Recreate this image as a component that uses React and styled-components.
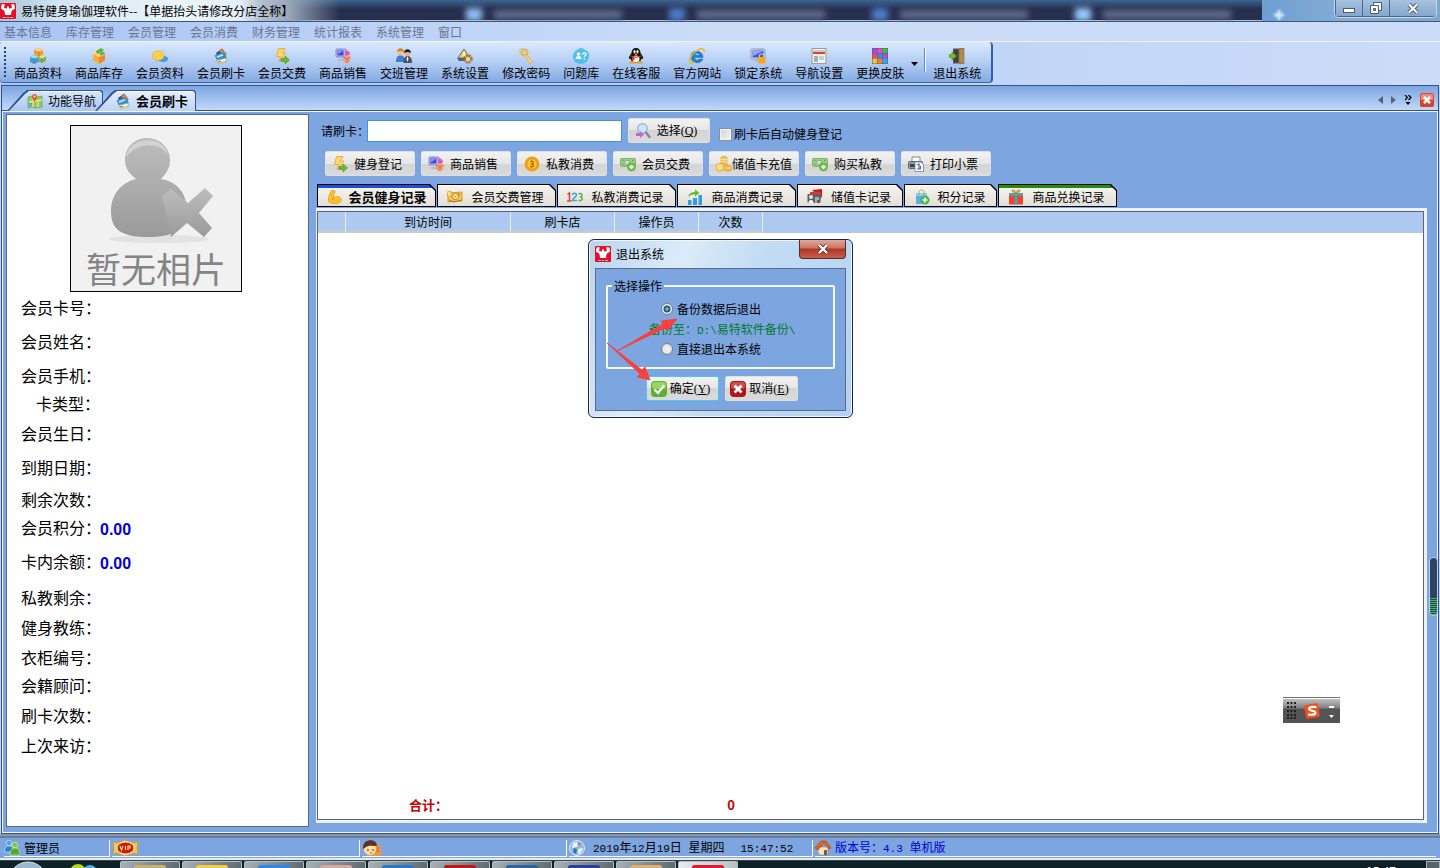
import React, { useState } from 'react';
import styled, { createGlobalStyle } from 'styled-components';

const GlobalStyle = createGlobalStyle`
    * {
        box-sizing: border-box;
    }
    body {
        margin: 0;
        overflow: hidden;
        font-family: "Noto Sans CJK SC", sans-serif;
        font-size: 12px;
        line-height: 14px;
        color: #000;
        background: #7da5e0;
    }
    button, input {
        margin: 0;
        font: inherit;
        color: inherit;
    }
    button {
        padding: 0;
        border: 0;
        background: none;
    }
    svg {
        display: block;
        flex: none;
    }
`;

/* ---------- icons ---------- */

const Logo = () => (
    <>
        <rect width="16" height="16" rx="1" fill="#e60f26" />
        <path d="M1.500 1.500l3-.5v2L4 5l3 .5V3.500h2v2l3-.5-.5-2V1l3 .5.500 4-3.500 2.500-.5 4h-6l-.5-4L1 5.500z" fill="#fff" />
        <path d="M3 14.500h3M7 14.500h2M10 14.500h3" stroke="#ffb9bd" strokeWidth="1" />
    </>
);

const Bolt = () => (
    <>
        <path d="M4.500.5h6.500L8.500 5H12L5 14l1.500-5.500H2.500z" fill="#ffd766" stroke="#e0a63a" strokeWidth=".8" />
        <path d="M7 10.500h4V8l4.500 4-4.500 4v-2.500H7z" fill="#6fba2c" stroke="#4a8f1c" strokeWidth=".6" />
    </>
);

const Shop = () => (
    <>
        <rect x="1" y="1" width="10" height="8" rx="1" fill="#b4b8f0" stroke="#8088d0" />
        <rect x="2.500" y="2.500" width="6" height="5" fill="#3d4fd0" />
        <path d="M3 3h5L3 6z" fill="#8c9cf0" />
        <path d="M3 11h6l1 2H3z" fill="#b4b8d8" />
        <path d="M10 3c2-1.500 5 0 5 3l-2 2h-3z" fill="#e254c0" />
        <path d="M8 9l4-2 3.500 2v4L12 15.500 8 13.500z" fill="#f4a172" />
        <path d="M8 9l4 2 3.500-2M12 11v4" stroke="#c85a50" fill="none" strokeWidth=".8" />
    </>
);

const Money = () => (
    <>
        <rect x=".5" y="2.500" width="15" height="8" rx="1" fill="#9ccb85" stroke="#7eb26c" />
        <circle cx="7" cy="6.500" r="2.300" fill="#cfe8bf" stroke="#5c9a4c" strokeWidth=".6" />
        <path d="M2.500 4.500h1M12 4.500h1M2.500 8.500h1" stroke="#4f8a42" />
        <circle cx="11.500" cy="11" r="4" fill="#7cc450" stroke="#4f9f2c" strokeWidth=".6" />
        <path d="M11.500 9v4M9.500 11h4" stroke="#fff" strokeWidth="1.400" />
    </>
);

const Cards = () => (
    <>
        <path d="M3 5l6-4.500L13.500 6 12 9l-7 1z" fill="#35507c" />
        <path d="M6 3l3-2 4 5-1 3z" fill="#e8842c" />
        <path d="M1.500 7.500L10 4l4 6-9 4z" fill="#2c8be0" />
        <path d="M3.500 8.300L9.500 6l1 1.500-6 2.500z" fill="#bfe3ff" />
        <path d="M3 12.500l9.500-2.500 1.500 3-8.500 2.500z" fill="#eef0e0" stroke="#8fae4c" strokeWidth=".7" />
        <path d="M5 14l3-1" stroke="#e03c2c" />
    </>
);

const drawings = {
    logo: <Logo />,
    bolt: <Bolt />,
    shop: <Shop />,
    money: <Money />,
    cards: <Cards />,
    boxes: (
        <>
            <path d="M4 2l5-2 4 2v5L9 9 4 7z" fill="#f29a35" />
            <path d="M4 2l5 1.500L13 2 9 .2z" fill="#ffd28a" />
            <path d="M0 9l4-2 5 2v5l-5 2-4-2z" fill="#3f9fd8" />
            <path d="M0 9l4 1.500L9 9 4.500 7z" fill="#a8dcf4" />
            <path d="M8 9l4-2 4 1.500V13l-4 2-4-2z" fill="#7cb648" />
            <path d="M8 9l4 1.500 4-2L12 7z" fill="#d0eba6" />
            <path d="M9 3.500V9M4 10.500V16M12 10.500V15" stroke="#8a5d2a" strokeWidth=".5" />
        </>
    ),
    stock: (
        <>
            <path d="M2 6l6 2.500V16l-6-3.500z" fill="#f7ad3c" />
            <path d="M14 6L8 8.500V16l6-3.500z" fill="#e88a1c" />
            <path d="M1 5l5-2 3 3-1 3z" fill="#ffd876" />
            <path d="M8 7l5-3 2 2-6 3z" fill="#ffc34c" />
            <path d="M5 3l5-3 3 2-3 3-4 1z" fill="#65b32e" />
            <path d="M9 6l3-2 2 1-4 2.500z" fill="#2f92d4" />
        </>
    ),
    chat: (
        <>
            <circle cx="11" cy="4" r="3.500" fill="#b7defa" />
            <path d="M6 10c0-3 10-3 10 1 0 4-10 4-10 0z" fill="#3f9ae0" />
            <path d="M6 3c4 0 6 2 6 4.500S10 12 6.500 12L4 14l.3-2.500C2 11 .5 9.500.5 7.500.5 5 3 3 6 3z" fill="#ffd04a" stroke="#e8a524" strokeWidth=".7" />
        </>
    ),
    people: (
        <>
            <circle cx="4.500" cy="4.500" r="3.200" fill="#f3c08c" />
            <path d="M1 4c0-5 7-5 7 0-2-1.500-5-1.500-7 0z" fill="#c98a1c" />
            <path d="M0 14c0-5 1.500-6.500 4.500-6.500S9 9 9 14z" fill="#3c7dd0" />
            <circle cx="11.500" cy="5" r="3" fill="#e8b088" />
            <path d="M8 5c0-5 7-5 7 0-2-1.500-5-1.500-7 0z" fill="#1c1c20" />
            <path d="M7.500 15c0-5 1.500-7 4-7s4.500 2 4.500 7z" fill="#4a505c" />
            <path d="M11.500 8l-1 3 1 3 1-3z" fill="#fff" />
        </>
    ),
    gear: (
        <>
            <path d="M7 1l6 9H1z" fill="#f4cf5c" stroke="#5c6c80" />
            <path d="M0 10h9v3H2z" fill="#4c6488" />
            <path d="M7 4v4" stroke="#fff4b0" strokeWidth="2" />
            <circle cx="11" cy="11" r="3.500" fill="none" stroke="#a87a34" strokeWidth="2.500" strokeDasharray="2 .8" />
            <circle cx="11" cy="11" r="2" fill="#f5d58a" />
        </>
    ),
    key: (
        <>
            <circle cx="4" cy="3.500" r="3" fill="none" stroke="#c8ccd0" strokeWidth="1.500" />
            <circle cx="6.500" cy="4.500" r="3" fill="none" stroke="#e9b653" strokeWidth="2.200" />
            <path d="M8 6l6.500 8-2.500 1.500-2-2 .5-1-1.500-1 .3-1.200L6.500 8z" fill="#ffd682" stroke="#dba03c" strokeWidth=".7" />
        </>
    ),
    question: (
        <>
            <path d="M8 0c2 0 3 1 4 2 3 1 4.500 3 4 6.500-.5 4.500-4 7.500-8 7.500S.5 13.500 0 9c0-3 1-5.500 4-7 1-1 2-2 4-2z" fill="#4fc0ea" />
            <circle cx="5.500" cy="6" r="1.700" fill="#fff" />
            <path d="M2.500 11c0-4 6-4 6 0z" fill="#fff" />
            <path d="M9.500 6.500c0-2.500 4-2 3.500 0-.3 1-1.700 1-1.700 2.500M11.300 10v1.400" stroke="#fff" strokeWidth="1.300" fill="none" />
        </>
    ),
    penguin: (
        <>
            <path d="M8 0c3 0 4.500 2 4.500 5 1.500 2 3 4 2.500 6l-1.500-.5C13 13 11 15 8 15s-5-2-5.500-4.500L1 11c-.5-2 1-4 2.500-6C3.500 2 5 0 8 0z" fill="#141414" />
            <ellipse cx="8" cy="11" rx="3.500" ry="3.600" fill="#fff" />
            <ellipse cx="6.500" cy="3.500" rx="1.100" ry="1.500" fill="#fff" />
            <ellipse cx="9.500" cy="3.500" rx="1.100" ry="1.500" fill="#fff" />
            <path d="M5.500 5.500h5L8 7z" fill="#ffb400" />
            <path d="M3 7c3 2 7 2 10 0l.3 1.500c-3 1.500-7 1.500-10.600 0z" fill="#e42020" />
            <path d="M4.500 9l2 .3V12h-2z" fill="#e42020" />
            <path d="M1.500 15c1-2 5-2 6 0zM8.500 15c1-2 5-2 6 0z" fill="#f49a1c" stroke="#f49a1c" />
        </>
    ),
    ie: (
        <>
            <path d="M14 9.500H5.500c.3 3 4 3.500 5 1.500h3.300C12 16.500 2 16 2 8.500 2 1.500 14 1 14 9.500zM5.700 7.300h4.800c-.4-2.700-4.300-2.700-4.800 0z" fill="#1c84d4" stroke="#0e5ea8" strokeWidth=".5" />
            <path d="M15 4.500C16 1 13-.5 9 2 4 5 0 10 .8 13.500c.5 2.500 3.200 2 5.200.6" fill="none" stroke="#f0b720" strokeWidth="1.400" />
        </>
    ),
    lock: (
        <>
            <rect x="1" y="1" width="14" height="10" rx="1" fill="#d4dcec" stroke="#8a98b8" />
            <rect x="2.500" y="2.500" width="11" height="7" fill="#4359d6" />
            <path d="M3 3h10L3 8z" fill="#93a4f2" />
            <path d="M3 14h6l-1-2H5z" fill="#b8bfd0" />
            <rect x="8" y="9" width="7.500" height="6.500" rx="1" fill="#f7a81c" />
            <path d="M9.500 9V7.500c0-2 4.500-2 4.500 0V9" fill="none" stroke="#c4c8d0" strokeWidth="1.200" />
        </>
    ),
    page: (
        <>
            <rect x="1" y=".5" width="14" height="15" fill="#f0f0f0" stroke="#9c9c9c" />
            <rect x="2" y="2" width="12" height="2" fill="#c8c8c8" />
            <rect x="2" y="4" width="12" height="2" fill="#d8452c" />
            <rect x="3" y="8" width="4" height="6" fill="#a8acb0" />
            <rect x="8" y="8" width="5" height="4" fill="#c8ccd0" />
        </>
    ),
    palette: (
        <>
            <rect width="16" height="16" fill="#5c5c70" />
            <rect x=".5" y=".5" width="4.500" height="4.500" fill="#b044e0" />
            <rect x="5.500" y=".5" width="4.500" height="4.500" fill="#f048b8" />
            <rect x="10.500" y=".5" width="5" height="4.500" fill="#34c048" />
            <rect x=".5" y="5.500" width="4.500" height="4.500" fill="#f0486c" />
            <rect x="5.500" y="5.500" width="4.500" height="4.500" fill="#3888e8" />
            <rect x="10.500" y="5.500" width="5" height="4.500" fill="#a050e0" />
            <rect x=".5" y="10.500" width="4.500" height="5" fill="#f4c430" />
            <rect x="5.500" y="10.500" width="4.500" height="5" fill="#f08038" />
            <rect x="10.500" y="10.500" width="5" height="5" fill="#38a8e0" />
        </>
    ),
    door: (
        <>
            <rect x="4" y=".5" width="11" height="15" fill="#5c5048" />
            <path d="M10 1l5-1v16l-5-1z" fill="#b08850" stroke="#88683c" strokeWidth=".6" />
            <rect x="5" y="2" width="4" height="12" fill="#45403c" />
            <path d="M0 6.500h3V4l4.500 4L3 12V9.500H0z" fill="#72c028" stroke="#44881c" strokeWidth=".6" />
        </>
    ),
    map: (
        <>
            <path d="M1 4l4-1 5 1 5-1v11l-5 1-5-1-4 1z" fill="#8ecb62" stroke="#5a9440" strokeWidth=".6" />
            <path d="M2 9l13-2M6 3v11M11 8v6" stroke="#f6e08a" strokeWidth="1.300" />
            <path d="M2 10h3v3H2z" fill="#5aa6e0" />
            <path d="M7.500 9C5.500 6 5 5 5 3.500 5 0 10 0 10 3.500c0 1.500-.5 2.500-2.500 5.500z" fill="#e25a20" />
            <circle cx="7.500" cy="3.500" r="1" fill="#fff" />
        </>
    ),
    search: (
        <>
            <circle cx="7.500" cy="5.500" r="4.800" fill="#c4e8fa" stroke="#a8b8c4" strokeWidth="1.400" />
            <path d="M11 9.500l3.500 4.500" stroke="#8c8c8c" strokeWidth="2.500" strokeLinecap="round" />
            <path d="M1 10h4V8l4 3.500L5 15v-2H1z" fill="#c860d8" />
        </>
    ),
    coin: (
        <>
            <circle cx="8" cy="8" r="7.500" fill="#f2a516" />
            <circle cx="8" cy="8" r="5.300" fill="#ffc838" stroke="#d88a10" strokeWidth=".8" />
            <path d="M6.300 5.500c2.500-1.300 4.200 1 1.400 2.300 3.200.6 2 4-1.600 2.500" fill="none" stroke="#a8620c" strokeWidth="1.300" />
        </>
    ),
    coins: (
        <>
            <path d="M5 1.500c0-1.500 6-1.500 6 0V9H5z" fill="#f6c152" stroke="#d49a34" strokeWidth=".6" />
            <path d="M.5 8.500c0-1.500 6.500-1.500 6.500 0V14c0 1.500-6.500 1.500-6.500 0z" fill="#fbd271" stroke="#d49a34" strokeWidth=".6" />
            <path d="M8 10.500c0-1.500 7.500-1.500 7.500 0V14c0 1.500-7.500 1.500-7.500 0z" fill="#f3b845" stroke="#d49a34" strokeWidth=".6" />
            <path d="M5 3.500h6M5 5.500h6M1 10h6M1 12h6M8 12h7" stroke="#fff0b8" strokeWidth=".7" />
        </>
    ),
    printer: (
        <>
            <path d="M4 1h8v5H4z" fill="#fff" stroke="#808890" />
            <rect x=".5" y="5.500" width="14" height="7" rx="1" fill="#9098a0" stroke="#5c646c" />
            <rect x="2" y="8" width="5" height="3" fill="#3c444c" />
            <path d="M7 6h6l2.500 2.500V15.500H7z" fill="#fff" stroke="#7080b0" strokeWidth=".8" />
            <path d="M9 9l2-1v5M9 13h4M12.500 10v3" stroke="#5068b8" fill="none" strokeWidth="1.200" />
        </>
    ),
    arm: (
        <>
            <path d="M4.500 1.500l3 .2c1 1.300.6 2.300-.8 3L6.500 9C8.500 7 12.500 7 14 9.500c1 3-1.500 5-5 5-4 0-6.500-.5-7.500-2C1 9 2.500 5 4.500 1.500z" fill="#ffc02e" stroke="#e99a14" strokeWidth=".8" />
            <path d="M6.500 9l-1 2" stroke="#e08c10" fill="none" />
        </>
    ),
    bills: (
        <>
            <path d="M1 4l14-1v9L1 13z" fill="#f7c64a" stroke="#cc8e20" strokeWidth=".8" />
            <path d="M0 3l4-1 1 5-4 1z" fill="#fbe08a" stroke="#cc8e20" strokeWidth=".6" />
            <circle cx="8.500" cy="7.500" r="3" fill="#fff0b4" stroke="#c07c18" />
            <path d="M2 11l5 2 8-2M12 4v3M7.500 7.500h2" stroke="#b8741c" fill="none" />
        </>
    ),
    digits: (
        <>
            <path d="M.5 5.500L2.500 4v8.500M0 12h4.500" stroke="#e43c3c" strokeWidth="1.500" fill="none" />
            <path d="M5.500 6c0-2.500 4-2.500 4 0 0 2-4 3-4 5.500h4.500" stroke="#38a4dc" strokeWidth="1.500" fill="none" />
            <path d="M11.500 4.800c4-1.300 4.500 2.400 1.500 3 3.500.4 3 4.700-1.500 3.400" stroke="#4cb45c" strokeWidth="1.500" fill="none" />
        </>
    ),
    chart: (
        <>
            <path d="M1 11h3.500v5H1zM6 9h4v7H6zM11.500 6H15v10h-3.500z" fill="#2e9fe0" />
            <path d="M1 8c1-4 4-5 7-5V.5L12.500 4 8 7.500V5.500C5 5.500 3 6 1 8z" fill="#64bc30" />
        </>
    ),
    cardread: (
        <>
            <path d="M5 1l10-1v8l-2 1z" fill="#c81c24" />
            <rect x="3" y="3" width="11" height="7" fill="#e43038" />
            <rect x=".5" y="5" width="13" height="9" rx="1" fill="#5c6068" />
            <circle cx="4" cy="8" r="2" fill="#f4e0cc" />
            <path d="M1.500 14c0-4 5-4 5 0z" fill="#fff" />
            <path d="M8 8h4v3h-2v3H8z" fill="#a8acb4" />
        </>
    ),
    bag: (
        <>
            <path d="M2 4h11v11H2z" fill="#58b0e4" />
            <path d="M2 4h11v3H2z" fill="#88ccf0" />
            <path d="M5 6V2.500c0-2 5-2 5 0V6" fill="none" stroke="#c89c58" />
            <circle cx="11" cy="11" r="4.500" fill="#48b84c" />
            <path d="M11 8.500v5M8.500 11h5" stroke="#fff" strokeWidth="1.600" />
        </>
    ),
    gift: (
        <>
            <rect x="1" y="4" width="14" height="11.500" fill="#ee4438" />
            <rect x="1" y="4" width="14" height="2.500" fill="#52a8a4" />
            <path d="M6.500 4h3v11.500h-3z" fill="#48a89c" />
            <path d="M8 4C4 4 3 1 5 .7 7 .5 8 4 8 4s1-3.500 3-3.300C13 1 12 4 8 4z" fill="#e8a040" stroke="#b87020" strokeWidth=".5" />
        </>
    ),
    ok: (
        <>
            <rect width="16" height="16" rx="4" fill="#5eb030" />
            <rect x="1" y="1" width="14" height="7" rx="3" fill="#94d860" />
            <path d="M3.500 8.500l3.500 3.500 6-7.500" stroke="#fff" strokeWidth="2.300" fill="none" />
        </>
    ),
    cancel: (
        <>
            <rect width="16" height="16" rx="4" fill="#b01418" />
            <rect x="1" y="1" width="14" height="7" rx="3" fill="#d44a48" />
            <path d="M4.500 4.500l7 7M11.500 4.500l-7 7" stroke="#fff" strokeWidth="2.800" />
        </>
    ),
    users: (
        <>
            <circle cx="5" cy="3" r="2.800" fill="#4ca8e4" stroke="#dceefa" strokeWidth=".6" />
            <path d="M.5 12c0-5 2-6 4.500-6s4.500 1 4.500 6z" fill="#2c84cc" stroke="#dceefa" strokeWidth=".6" />
            <circle cx="11" cy="5" r="2.800" fill="#7cc838" stroke="#e4f4d4" strokeWidth=".6" />
            <path d="M6 15c0-5 2-7 5-7s5 2 5 7z" fill="#58a828" stroke="#e4f4d4" strokeWidth=".6" />
        </>
    ),
    globe: (
        <>
            <circle cx="8" cy="8" r="7.500" fill="#8abce0" stroke="#dfe8f0" />
            <path d="M4 3l4-1 2 3-3 2-4 1zM9 9l5-1-2 5-3 1z" fill="#e8f4fc" />
            <path d="M5 8l3 1-1 5-3-2z" fill="#2e74b8" />
            <circle cx="10" cy="4" r="1.500" fill="#d06868" />
        </>
    ),
    home: (
        <>
            <path d="M3 7h10v8H5l-2-2z" fill="#f4e4c8" stroke="#a07850" strokeWidth=".6" />
            <path d="M0 8l6-7 5 0 5 7-2 1-5-6-6 7z" fill="#e4641c" stroke="#a83c10" strokeWidth=".6" />
            <path d="M9 10h3v5H9z" fill="#8c5428" />
        </>
    ),
    clerk: (
        <>
            <rect x="8" y="5" width="11" height="11" fill="#f0943c" />
            <path d="M10 8h7M10 11h7" stroke="#b86420" />
            <circle cx="8" cy="9" r="6.500" fill="#fcdca4" stroke="#c89058" strokeWidth=".6" />
            <path d="M1 9c-1-11 14-11 14-3-5 0-8-1-11 1z" fill="#5c3424" />
            <circle cx="6" cy="10" r=".8" fill="#222" />
            <circle cx="11" cy="10" r=".8" fill="#222" />
            <path d="M8 13h2" stroke="#d04838" />
        </>
    ),
    sogou: (
        <>
            <rect x="1" y="1" width="14" height="14" rx="2" fill="#f0501c" transform="rotate(-10 8 8)" />
            <path d="M12.500 4C8 3.500 5 4 5 6s6.500 1.500 6.500 3.700C11.500 12 8 12 4 11.500" fill="none" stroke="#fff" strokeWidth="2.200" />
        </>
    ),
    closeSmall: (
        <>
            <rect width="16" height="16" rx="2" fill="#d8412c" />
            <rect x="1" y="1" width="14" height="7" fill="#ee8a78" />
            <path d="M4.500 4.500l7 7M11.500 4.500l-7 7" stroke="#fff" strokeWidth="3" />
        </>
    ),
};

const Icon = ({ name, size = 16, wide }) => (
    <svg width={wide || size} height={size} viewBox={`0 0 ${wide || 16} 16`} aria-hidden="true">
        {drawings[name]}
    </svg>
);

/* ---------- window chrome ---------- */

const Window = styled.div`
    position: relative;
    display: flex;
    flex-direction: column;
    height: 100vh;
    overflow: hidden;
    background: #c3d6f7;
`;

const TitleBar = styled.header`
    display: flex;
    align-items: flex-start;
    position: relative;
    height: 22px;
    overflow: hidden;
    border-bottom: 1px solid #3f5878;
    background: linear-gradient(#3c6590 0, rgba(38, 46, 78, 0) 9px), #272e4e;
`;

const Glass = styled.div`
    position: absolute;
    inset: 0;
    display: flex;
    box-shadow: inset 0 -1px #a9bfd4;
`;

const GlassLeft = styled.div`
    width: 340px;
    background: linear-gradient(90deg, #a8c4da 0, #d4e6f2 60px, #eaf4fa 180px, #e4eff8 240px, #b4c0d0 260px, #98a4b8 290px, rgba(60, 75, 110, 0) 100%);
`;

const GlassTabs = styled.div`
    flex: 1;
    display: flex;
    justify-content: flex-end;
    align-items: flex-end;
    gap: 47px;
    padding-right: 31px;
    filter: blur(3px);
`;

const GlassTab = styled.div`
    display: flex;
    align-items: center;
    gap: 12px;
    &::before {
        content: '';
        width: 16px;
        height: 13px;
        background: ${(props) => props.$color};
    }
    &::after {
        content: '';
        width: 128px;
        height: 9px;
        background: #5f6b8e;
    }
`;

const GlassRight = styled.div`
    width: 178px;
    padding: 8px 10px;
    background: linear-gradient(90deg, #6d9fd2, #86aed6 50%, #7fa5cb);
    svg {
        filter: blur(1px);
    }
`;

const Caption = styled.div`
    position: relative;
    flex: 1;
    display: flex;
    align-items: center;
    gap: 5px;
    height: 21px;
`;

const CaptionButtons = styled.div`
    position: relative;
    display: flex;
    margin-right: 3px;
    border: 1px solid #c2d8ee;
    border-top: 0;
    border-radius: 0 0 5px 5px;
    overflow: hidden;
`;

const CaptionButton = styled.button`
    display: flex;
    align-items: center;
    justify-content: center;
    width: ${(props) => (props.$wide ? 47 : 27)}px;
    height: 17px;
    border-bottom: 1px solid #4a6a8c;
    border-left: 1px solid #4a6a8c;
    background: linear-gradient(#a6c2de, #84a8cc);
`;

const MenuBar = styled.nav`
    display: flex;
    align-items: center;
    gap: 14px;
    height: 20px;
    padding-left: 4px;
    color: #6a7690;
    border-bottom: 1px solid #eef4fd;
    background: linear-gradient(90deg, #a9c5f5, #ccdcf8 50%);
`;

const ToolStrip = styled.div`
    display: flex;
    height: 43px;
    padding-bottom: 2px;
    background: linear-gradient(90deg, #a9c5f5, #ccdcf8);
`;

const Toolbar = styled.div`
    display: flex;
    align-items: stretch;
    gap: 1px;
    padding-right: 4px;
    border-right: 2px solid #2b5fb0;
    border-bottom: 1px solid #3c66a8;
    border-radius: 4px;
    background: linear-gradient(#dce9fd, #b4cef4 50%, #84a9e2);
`;

const Grip = styled.i`
    width: 7px;
    margin: 5px 0;
    background: repeating-linear-gradient(#26406c 0 2px, transparent 2px 4px) no-repeat 4px 0 / 2px 100%;
`;

const ToolButton = styled.button`
    display: flex;
    flex-direction: column;
    align-items: center;
    gap: 2px;
    padding: 6px 6px 0;
    white-space: nowrap;
`;

const ToolDivider = styled.i`
    width: 2px;
    margin: 6px 0 10px 5px;
    border-left: 1px solid #5a8ad0;
    border-right: 1px solid #fff;
`;

const DropArrow = styled.button`
    display: flex;
    align-items: center;
    width: 7px;
    padding-top: 4px;
`;

const DocTabs = styled.div`
    display: flex;
    align-items: flex-end;
    height: 26px;
    margin: 0 1px;
    padding-left: 5px;
    border: 1px solid #2d5390;
    background: linear-gradient(#7da5e0, #c2d8f9);
`;

const DocTab = styled.button`
    position: relative;
    isolation: isolate;
    display: flex;
    align-items: center;
    gap: 5px;
    height: 21px;
    margin-bottom: -1px;
    padding: ${(props) => (props.$active ? '0 8px 0 20px' : '0 7px 0 20px')};
    margin-left: ${(props) => (props.$active ? '-8px' : '0')};
    font-weight: ${(props) => (props.$active ? 700 : 400)};
    font-size: ${(props) => (props.$active ? 13 : 12)}px;
    &::before,
    &::after {
        content: '';
        position: absolute;
        inset: 0;
        z-index: -2;
        background: #2d5390;
        clip-path: polygon(0 100%, 16px 3px, 20px 0, calc(100% - 2px) 0, 100% 2px, 100% 100%);
    }
    &::after {
        inset: 1px 1px 0 2px;
        z-index: -1;
        background: ${(props) => (props.$active ? 'linear-gradient(#fff 0 1px, #e2edfd 1px, #bcd4f8)' : 'linear-gradient(#fff 0 1px, #d4e3fb 1px, #a9c6f2)')};
    }
`;

const DocTools = styled.div`
    display: flex;
    align-items: center;
    gap: 8px;
    height: 24px;
    margin-left: auto;
    padding: 4px 4px 0 0;
`;

/* ---------- workspace ---------- */

const Workspace = styled.main`
    flex: 1;
    display: flex;
    gap: 7px;
    min-height: 0;
    margin: 0 1px;
    padding: 3px 11px 6px 4px;
    border: solid #2d5390;
    border-width: 0 1px 1px;
    box-shadow: inset 0 0 0 1px #f4f8fe;
    background: #7da5e0;
`;

const Member = styled.aside`
    width: 303px;
    padding: 10px 14px;
    border: 1px solid #56688c;
    background: #fff;
`;

const Photo = styled.figure`
    display: flex;
    flex-direction: column;
    align-items: center;
    width: 172px;
    height: 167px;
    margin: 0 auto 3px 49px;
    padding-top: 8px;
    border: 1px solid #000;
    background: #f1f1f1;
`;

const PhotoText = styled.figcaption`
    font-size: 35px;
    line-height: 48px;
    color: #848484;
`;

const Fields = styled.dl`
    margin: 0;
    font-size: 16px;
`;

const Field = styled.div`
    display: flex;
    align-items: flex-start;
    height: ${(props) => props.$step}px;
    line-height: 24px;
`;

const FieldName = styled.dt`
    width: 79px;
    text-align: right;
    white-space: nowrap;
`;

const FieldValue = styled.dd`
    margin: 3px 0 0;
    font-family: "Liberation Sans", sans-serif;
    font-weight: 700;
    color: #0000d8;
`;

const Content = styled.section`
    flex: 1;
    display: flex;
    flex-direction: column;
    min-width: 0;
    padding: 4px 0;
`;

const Row = styled.div`
    display: flex;
    align-items: center;
    gap: 6px;
    margin-bottom: 8px;
    padding-left: ${(props) => props.$indent}px;
`;

const CardLabel = styled.label`
    display: flex;
    align-items: center;
    white-space: nowrap;
`;

const CardInput = styled.input`
    width: 255px;
    height: 22px;
    margin-left: -2px;
    padding: 0 4px;
    border: 1px solid #3c96e8;
    outline: 0;
    background: #fff;
`;

const PushButton = styled.button`
    display: flex;
    align-items: center;
    width: ${(props) => props.$width}px;
    height: 25px;
    padding: 0 6px;
    border: 1px solid ${(props) => (props.$focus ? '#48c8ec' : '#dcdfe4')};
    border-radius: 2px;
    background: linear-gradient(#f2f2f2, #e6e6e6 50%, #d4d4d4 50%, #dadada);
    white-space: nowrap;
    span {
        flex: 1;
        text-align: center;
    }
`;

const Key = styled.kbd`
    font-family: "Liberation Serif", serif;
    font-size: 12px;
`;

const Latin = styled.span`
    font-family: "Liberation Mono", monospace;
    font-size: 11px;
`;

const Check = styled.label`
    display: flex;
    align-items: center;
    align-self: flex-end;
    gap: 2px;
    margin-left: 3px;
    line-height: 18px;
`;

const CheckBox = styled.input`
    appearance: none;
    width: 13px;
    height: 13px;
    border: 1px solid #8e8f8f;
    background: linear-gradient(135deg, #cfd3d8, #f6f6f6);
    box-shadow: inset 0 0 0 1px #f4f4f4;
    &:checked {
        background: #2c628b;
    }
`;

const RecordTabs = styled.div`
    display: flex;
    gap: 1px;
    padding-left: 1px;
    margin-bottom: 1px;
`;

const RecordTab = styled.button`
    position: relative;
    isolation: isolate;
    display: flex;
    align-items: center;
    width: ${(props) => props.$width}px;
    height: 23px;
    padding: 3px 4px 0 10px;
    font-size: ${(props) => (props.$bold ? 13 : 12)}px;
    font-weight: ${(props) => (props.$bold ? 700 : 400)};
    white-space: nowrap;
    span {
        flex: 1;
        text-align: center;
    }
    &::before,
    &::after {
        content: '';
        position: absolute;
        inset: 0;
        z-index: -2;
        background: #000;
        clip-path: polygon(0 0, calc(100% - 6px) 0, 100% 6px, 100% 100%, 0 100%);
    }
    &::after {
        inset: 1px;
        z-index: -1;
        background: linear-gradient(${(props) => props.$stripe || '#fff'} 0 ${(props) => (props.$stripe ? 3 : 1)}px, #f4f3ee ${(props) => (props.$stripe ? 3 : 1)}px, #e2dfd6);
    }
`;

const GridFrame = styled.div`
    flex: 1;
    min-height: 0;
    border: solid #eaf1fa;
    border-width: 3px 3px 3px 1px;
`;

const Records = styled.table`
    width: 100%;
    height: 100%;
    table-layout: fixed;
    border-collapse: separate;
    border-spacing: 0;
    border: 1px solid #5f6468;
    background: #fff;
    th, td {
        padding: 0;
        text-align: center;
    }
`;

const HeadCell = styled.th`
    height: 21px;
    font-weight: 400;
    background: #adc9ef;
    border-right: ${(props) => (props.$last ? '0' : '1px solid #e9eef2')};
    border-bottom: 2px solid ${(props) => (props.$last ? '#adc9ef' : '#cdccc4')};
`;

const TotalCell = styled.td`
    height: 28px;
    font-size: 13px;
    font-weight: 700;
    color: #c80000;
`;

/* ---------- dialog ---------- */

const Dialog = styled.section`
    position: absolute;
    top: 239px;
    left: calc(50% - 132px);
    width: 265px;
    height: 179px;
    padding: 0 6px 6px;
    border: 1px solid #1c2838;
    border-radius: 6px;
    background: linear-gradient(110deg, #b9d4f0, #dcebf8 30%, #c2dcf4 55%, #b4d2f0);
    box-shadow: inset 0 0 0 1px #eef6fd;
`;

const DialogTitle = styled.header`
    display: flex;
    align-items: center;
    height: 28px;
    h2 {
        flex: 1;
        margin: 0 0 0 5px;
        font-size: 12px;
        font-weight: 400;
    }
`;

const DialogClose = styled.button`
    display: flex;
    align-items: center;
    justify-content: center;
    align-self: flex-start;
    width: 47px;
    height: 19px;
    border: 1px solid #5c2a2a;
    border-top: 0;
    border-radius: 0 0 4px 4px;
    background: linear-gradient(#e0a89c, #cc7464 45%, #b03424 50%, #c8604c);
`;

const DialogBody = styled.div`
    height: 143px;
    padding: 10px;
    border: 1px solid #5a6c88;
    background: #7da5e0;
`;

const Group = styled.fieldset`
    display: flex;
    flex-direction: column;
    height: 90px;
    margin: 0;
    padding: 6px 0 0 53px;
    border: 2px solid #f4f8ff;
    border-radius: 2px;
    legend {
        margin-left: -49px;
        padding: 0 2px;
    }
`;

const Choice = styled.label`
    display: flex;
    align-items: center;
    gap: 4px;
    height: 20px;
`;

const Radio = styled.input`
    appearance: none;
    width: 12px;
    height: 12px;
    border: 1px solid #7c8088;
    border-radius: 50%;
    background: radial-gradient(#f4f4f4, #d4d6d8);
    &:checked {
        background: radial-gradient(#58b8e0 0 1px, #16405c 3px, #f0f0f0 4px);
    }
`;

const BackupPath = styled.div`
    height: 20px;
    margin-left: -12px;
    line-height: 20px;
    color: #007a2c;
    white-space: nowrap;
`;

const DialogActions = styled.div`
    display: flex;
    justify-content: center;
    gap: 6px;
    margin-top: 7px;
    padding-left: 2px;
    button {
        padding: 0 4px;
    }
`;

const Pointer = styled.svg`
    position: absolute;
    left: 14px;
    top: 72px;
    pointer-events: none;
`;

/* ---------- bottom bars and floating widgets ---------- */

const StatusBar = styled.footer`
    display: flex;
    gap: 2px;
    height: 26px;
    padding: 4px 4px 1px;
    border-top: 2px solid #8494b4;
    border-bottom: 2px solid #e4e8f0;
    background: #7da5e0;
    box-shadow: inset 0 2px #6f7c96;
`;

const StatusCell = styled.div`
    display: flex;
    align-items: center;
    gap: 4px;
    flex: ${(props) => (props.$width ? `0 0 ${props.$width}px` : 1)};
    border: solid #fff;
    border-width: 0 ${(props) => (props.$width ? 1 : 0)}px 1px 0;
    color: ${(props) => props.$color || '#000'};
    white-space: pre;
`;

const DateText = styled.span`
    margin-left: 4px;
`;

const TimeText = styled.time`
    margin-left: 12px;
`;

const TaskBar = styled.div`
    display: flex;
    align-items: flex-start;
    gap: 2px;
    height: 8px;
    overflow: hidden;
    border-top: 1px solid #33474c;
    background: #0d2127;
`;

const StartArea = styled.div`
    display: flex;
    gap: 24px;
    width: 118px;
    padding-left: 10px;
`;

const Task = styled.div`
    display: flex;
    justify-content: center;
    width: 60px;
    height: 8px;
    border: 1px solid #b4bec4;
    border-bottom: 0;
    border-radius: 2px 2px 0 0;
    background: ${(props) => (props.$active ? 'linear-gradient(90deg, #e8ecee, #b8c0c4)' : 'linear-gradient(120deg, #a8b2b6, #5c686c)')};
`;

const TaskClock = styled.time`
    margin: 3px 28px 0 auto;
    color: #fff;
`;

const ShowDesktop = styled.div`
    width: 14px;
    height: 8px;
    border: 1px solid #a8b4b8;
    background: #56646a;
`;

const Meter = styled.div`
    position: absolute;
    right: 2px;
    top: 557px;
    width: 9px;
    height: 59px;
    border: 1px solid #b8d0f0;
    border-radius: 4px;
    background: repeating-linear-gradient(#48b06c 0 1px, #1f4c48 1px 2px) no-repeat 0 100% / 100% 17px, #2f4263;
`;

const InputBar = styled.div`
    position: absolute;
    right: 100px;
    top: 697px;
    display: flex;
    align-items: center;
    justify-content: space-between;
    width: 57px;
    height: 26px;
    padding: 0 4px;
    border-top: 1px solid #707070;
    background: linear-gradient(#fff 0 1px, #c0c0c0 1px, #808080 10px, #545454 11px);
`;

const menus = ['基本信息', '库存管理', '会员管理', '会员消费', '财务管理', '统计报表', '系统管理', '窗口'];

const tools = [
    ['boxes', '商品资料'],
    ['stock', '商品库存'],
    ['chat', '会员资料'],
    ['cards', '会员刷卡'],
    ['bolt', '会员交费'],
    ['shop', '商品销售'],
    ['people', '交班管理'],
    ['gear', '系统设置'],
    ['key', '修改密码'],
    ['question', '问题库'],
    ['penguin', '在线客服'],
    ['ie', '官方网站'],
    ['lock', '锁定系统'],
    ['page', '导航设置'],
    ['palette', '更换皮肤'],
];

const fields = [
    ['会员卡号：', 34],
    ['会员姓名：', 34],
    ['会员手机：', 28],
    ['卡类型：', 30],
    ['会员生日：', 34],
    ['到期日期：', 32],
    ['剩余次数：', 28],
    ['会员积分：', 34, '0.00'],
    ['卡内余额：', 36, '0.00'],
    ['私教剩余：', 30],
    ['健身教练：', 30],
    ['衣柜编号：', 28],
    ['会籍顾问：', 30],
    ['刷卡次数：', 30],
    ['上次来访：', 28],
];

const actions = [
    ['bolt', '健身登记'],
    ['shop', '商品销售'],
    ['coin', '私教消费'],
    ['money', '会员交费'],
    ['coins', '储值卡充值'],
    ['money', '购买私教'],
    ['printer', '打印小票'],
];

const recordTabs = [
    { icon: 'arm', text: '会员健身记录', width: 119, stripe: '#1c50d8' },
    { icon: 'bills', text: '会员交费管理', width: 119 },
    { icon: 'digits', text: '私教消费记录', width: 119 },
    { icon: 'chart', text: '商品消费记录', width: 119 },
    { icon: 'cardread', text: '储值卡记录', width: 106 },
    { icon: 'bag', text: '积分记录', width: 93 },
    { icon: 'gift', text: '商品兑换记录', width: 119, stripe: '#1c900c' },
];

const taskIcons = ['#c8b070', '#f0d040', '#2c88e8', '#d8a8a0', '#2878c8', '#c01818', '#2c64a0', '#2c3ca0', '#e0b070', '#e41830'];

const App = () => {
    const [card, setCard] = useState('');
    const [auto, setAuto] = useState(false);
    const [tab, setTab] = useState(0);
    const [exitMode, setExitMode] = useState('backup');
    const [open, setOpen] = useState(true);

    return (
        <Window>
            <GlobalStyle />
            <TitleBar>
                <Glass>
                    <GlassLeft />
                    <GlassTabs>
                        <GlassTab $color="#90bef0" />
                        <GlassTab $color="#4c7cc8" />
                        <GlassTab $color="#4c7cc8" />
                        <GlassTab $color="#98ccfc" />
                    </GlassTabs>
                    <GlassRight>
                        <svg width="14" height="14" viewBox="0 0 14 14"><path d="M7 2v10M2 7h10" stroke="#d4ecff" strokeWidth="3" /></svg>
                    </GlassRight>
                </Glass>
                <Caption>
                    <Icon name="logo" />
                    <span>易特健身瑜伽理软件--【单据抬头请修改分店全称】</span>
                </Caption>
                <CaptionButtons>
                    <CaptionButton aria-label="最小化">
                        <svg width="12" height="12" viewBox="0 0 12 12"><rect x=".5" y="6.500" width="11" height="4" fill="#fff" stroke="#4a5a70" /></svg>
                    </CaptionButton>
                    <CaptionButton aria-label="还原">
                        <svg width="12" height="12" viewBox="0 0 12 12">
                            <path d="M3.500.5h8v8h-8z" fill="#fff" stroke="#4a5a70" />
                            <path d="M.5 3.500h8v8h-8z" fill="#fff" stroke="#4a5a70" />
                            <path d="M3.500 6.500h2v2h-2z" fill="#84a8cc" stroke="#4a5a70" />
                        </svg>
                    </CaptionButton>
                    <CaptionButton $wide aria-label="关闭">
                        <svg width="12" height="11" viewBox="0 0 12 11">
                            <path d="M2 1.500l8 8M10 1.500l-8 8" stroke="#4a5a70" strokeWidth="4" />
                            <path d="M2 1.500l8 8M10 1.500l-8 8" stroke="#fff" strokeWidth="2.200" />
                        </svg>
                    </CaptionButton>
                </CaptionButtons>
            </TitleBar>
            <MenuBar>
                {menus.map((m) => <span key={m}>{m}</span>)}
            </MenuBar>
            <ToolStrip>
                <Toolbar>
                    <Grip />
                    {tools.map(([icon, text]) => (
                        <ToolButton key={text}>
                            <Icon name={icon} />
                            {text}
                        </ToolButton>
                    ))}
                    <DropArrow aria-label="更多皮肤">
                        <svg width="7" height="4" viewBox="0 0 7 4"><path d="M0 0h7L3.500 4z" /></svg>
                    </DropArrow>
                    <ToolDivider />
                    <ToolButton>
                        <Icon name="door" />
                        退出系统
                    </ToolButton>
                </Toolbar>
            </ToolStrip>
            <DocTabs>
                <DocTab>
                    <Icon name="map" />
                    功能导航
                </DocTab>
                <DocTab $active>
                    <Icon name="cards" />
                    会员刷卡
                </DocTab>
                <DocTools>
                    <svg width="5" height="8" viewBox="0 0 5 8"><path d="M5 0v8L0 4z" fill="#56647c" /></svg>
                    <svg width="5" height="8" viewBox="0 0 5 8"><path d="M0 0v8l5-4z" fill="#56647c" /></svg>
                    <svg width="8" height="10" viewBox="0 0 8 10">
                        <path d="M1 0l2.500 2.500L1 5M4.500 0L7 2.500 4.500 5" fill="none" stroke="#000" strokeWidth="1.200" />
                        <path d="M1.500 7h5L4 10z" />
                    </svg>
                    <Icon name="closeSmall" size={14} />
                </DocTools>
            </DocTabs>
            <Workspace>
                <Member>
                    <Photo>
                        <svg width="130" height="110" viewBox="0 0 130 110">
                            <defs>
                                <linearGradient id="gray" x2="0" y2="1">
                                    <stop stopColor="#bdbdbd" />
                                    <stop offset="1" stopColor="#9a9a9a" />
                                </linearGradient>
                            </defs>
                            <ellipse cx="68" cy="105" rx="50" ry="4" fill="#e2e2e2" />
                            <path d="M56 4c13 0 23 10 23 22 0 8-4 14-9 19 18 3 26 16 26 32 0 20-16 26-38 26-24 0-38-5-38-25 0-18 10-29 25-33-6-5-11-10-11-19C34 14 43 4 56 4z" fill="url(#gray)" />
                            <path d="M35 24c2-22 38-24 42-3-8-14-33-13-42 3z" fill="#d2d2d2" />
                            <path d="M71 62l9-7 17 14 17-15 8 8-14 17 13 15-8 9-17-14-16 14" fill="url(#gray)" />
                        </svg>
                        <PhotoText>暂无相片</PhotoText>
                    </Photo>
                    <Fields>
                        {fields.map(([name, step, value]) => (
                            <Field key={name} $step={step}>
                                <FieldName>{name}</FieldName>
                                {value && <FieldValue>{value}</FieldValue>}
                            </Field>
                        ))}
                    </Fields>
                </Member>
                <Content>
                    <Row $indent={5}>
                        <CardLabel>
                            请刷卡：
                            <CardInput type="text" value={card} onChange={(e) => setCard(e.target.value)} />
                        </CardLabel>
                        <PushButton $width={82}>
                            <Icon name="search" />
                            <span>选择<Key>(<u>Q</u>)</Key></span>
                        </PushButton>
                        <Check>
                            <CheckBox type="checkbox" checked={auto} onChange={(e) => setAuto(e.target.checked)} />
                            刷卡后自动健身登记
                        </Check>
                    </Row>
                    <Row $indent={9}>
                        {actions.map(([icon, text]) => (
                            <PushButton key={text} $width={90}>
                                <Icon name={icon} />
                                <span>{text}</span>
                            </PushButton>
                        ))}
                    </Row>
                    <RecordTabs>
                        {recordTabs.map((t, i) => (
                            <RecordTab key={t.text} $width={t.width} $stripe={t.stripe} $bold={tab === i} onClick={() => setTab(i)}>
                                <Icon name={t.icon} />
                                <span>{t.text}</span>
                            </RecordTab>
                        ))}
                    </RecordTabs>
                    <GridFrame>
                        <Records>
                            <colgroup>
                                <col width="28" />
                                <col width="165" />
                                <col width="104" />
                                <col width="84" />
                                <col width="64" />
                                <col />
                            </colgroup>
                            <thead>
                                <tr>
                                    <HeadCell />
                                    <HeadCell>到访时间</HeadCell>
                                    <HeadCell>刷卡店</HeadCell>
                                    <HeadCell>操作员</HeadCell>
                                    <HeadCell>次数</HeadCell>
                                    <HeadCell $last />
                                </tr>
                            </thead>
                            <tbody>
                                <tr><td colSpan="6" /></tr>
                            </tbody>
                            <tfoot>
                                <tr>
                                    <TotalCell />
                                    <TotalCell>合计：</TotalCell>
                                    <TotalCell />
                                    <TotalCell />
                                    <TotalCell>0</TotalCell>
                                    <TotalCell />
                                </tr>
                            </tfoot>
                        </Records>
                    </GridFrame>
                </Content>
            </Workspace>
            <StatusBar>
                <StatusCell $width={106}><Icon name="users" />管理员</StatusCell>
                <StatusCell $width={248}>
                    <svg width="27" height="16" viewBox="0 0 27 16">
                        <path d="M1 2l4 1 8-3 9 3 4-1-1 6 1 6-4-1-9 3-8-3-4 1 1-6z" fill="#f6c850" stroke="#d09828" strokeWidth=".6" />
                        <ellipse cx="13.500" cy="8" rx="8.500" ry="6" fill="#d01818" stroke="#fff0b0" />
                        <path d="M8 6l1.500 4L11 6M13.500 6v4M16 10V6h2v2h-2" fill="none" stroke="#ffe070" strokeWidth="1.200" />
                    </svg>
                </StatusCell>
                <StatusCell $width={205}><Icon name="clerk" wide={20} /></StatusCell>
                <StatusCell $width={244}>
                    <Icon name="globe" />
                    <DateText>
                        <Latin>2019</Latin>年<Latin>12</Latin>月<Latin>19</Latin>日<Latin> </Latin>星期四
                    </DateText>
                    <TimeText><Latin>15:47:52</Latin></TimeText>
                </StatusCell>
                <StatusCell $color="#0000d8">
                    <Icon name="home" />
                    <span>版本号：<Latin>4.3 </Latin>单机版</span>
                </StatusCell>
            </StatusBar>
            <TaskBar>
                <StartArea>
                    <svg width="36" height="8" viewBox="0 0 36 8"><circle cx="18" cy="20" r="19" fill="#9cb8cc" stroke="#d8e4ec" /></svg>
                    <svg width="28" height="8" viewBox="0 0 28 8"><circle cx="8" cy="11" r="8" fill="#b4d820" /><circle cx="20" cy="11" r="7" fill="#4cb4e8" /></svg>
                </StartArea>
                {taskIcons.map((color, i) => (
                    <Task key={i} $active={i === 9}>
                        <svg width="32" height="8" viewBox="0 0 32 8"><path d="M0 8V5q0-2 3-2h26q3 0 3 2v3z" fill={color} /></svg>
                    </Task>
                ))}
                <TaskClock>15:47</TaskClock>
                <ShowDesktop />
            </TaskBar>
            <Meter />
            <InputBar>
                <svg width="9" height="17" viewBox="0 0 9 17"><path d="M0 1h9M0 5h9M0 9h9M0 13h9M0 16h9" stroke="#222" strokeWidth="2" strokeDasharray="2 1.500" /></svg>
                <Icon name="sogou" />
                <svg width="9" height="16" viewBox="0 0 9 16"><path d="M2 3h5v2H2zM2 12h5l-2.500 3z" fill="#fff" /></svg>
            </InputBar>
            {open && (
                <Dialog role="dialog" aria-label="退出系统">
                    <DialogTitle>
                        <Icon name="logo" />
                        <h2>退出系统</h2>
                        <DialogClose aria-label="关闭" onClick={() => setOpen(false)}>
                            <svg width="12" height="10" viewBox="0 0 12 10">
                                <path d="M2 1l8 8M10 1L2 9" stroke="#5c3434" strokeWidth="4" />
                                <path d="M2 1l8 8M10 1L2 9" stroke="#fff" strokeWidth="2.400" />
                            </svg>
                        </DialogClose>
                    </DialogTitle>
                    <DialogBody>
                        <Group>
                            <legend>选择操作</legend>
                            <Choice>
                                <Radio type="radio" name="exit" checked={exitMode === 'backup'} onChange={() => setExitMode('backup')} />
                                备份数据后退出
                            </Choice>
                            <BackupPath>备份至：<Latin>D:\</Latin>易特软件备份<Latin>\</Latin></BackupPath>
                            <Choice>
                                <Radio type="radio" name="exit" checked={exitMode === 'direct'} onChange={() => setExitMode('direct')} />
                                直接退出本系统
                            </Choice>
                        </Group>
                        <DialogActions>
                            <PushButton $width={73} $focus>
                                <Icon name="ok" />
                                <span>确定<Key>(<u>Y</u>)</Key></span>
                            </PushButton>
                            <PushButton $width={73} onClick={() => setOpen(false)}>
                                <Icon name="cancel" />
                                <span>取消<Key>(<u>E</u>)</Key></span>
                            </PushButton>
                        </DialogActions>
                    </DialogBody>
                    <Pointer width="80" height="72" viewBox="0 0 80 72">
                        <path d="M14 39L60 12 58 9 74 7 64 19 62 16z" fill="#f8403c" stroke="#f8403c" strokeWidth=".8" />
                        <path d="M4 31L39 58l3-3 5 13-13-3 3-3z" fill="#f8403c" stroke="#f8403c" strokeWidth=".8" />
                    </Pointer>
                </Dialog>
            )}
        </Window>
    );
};

export default App;
